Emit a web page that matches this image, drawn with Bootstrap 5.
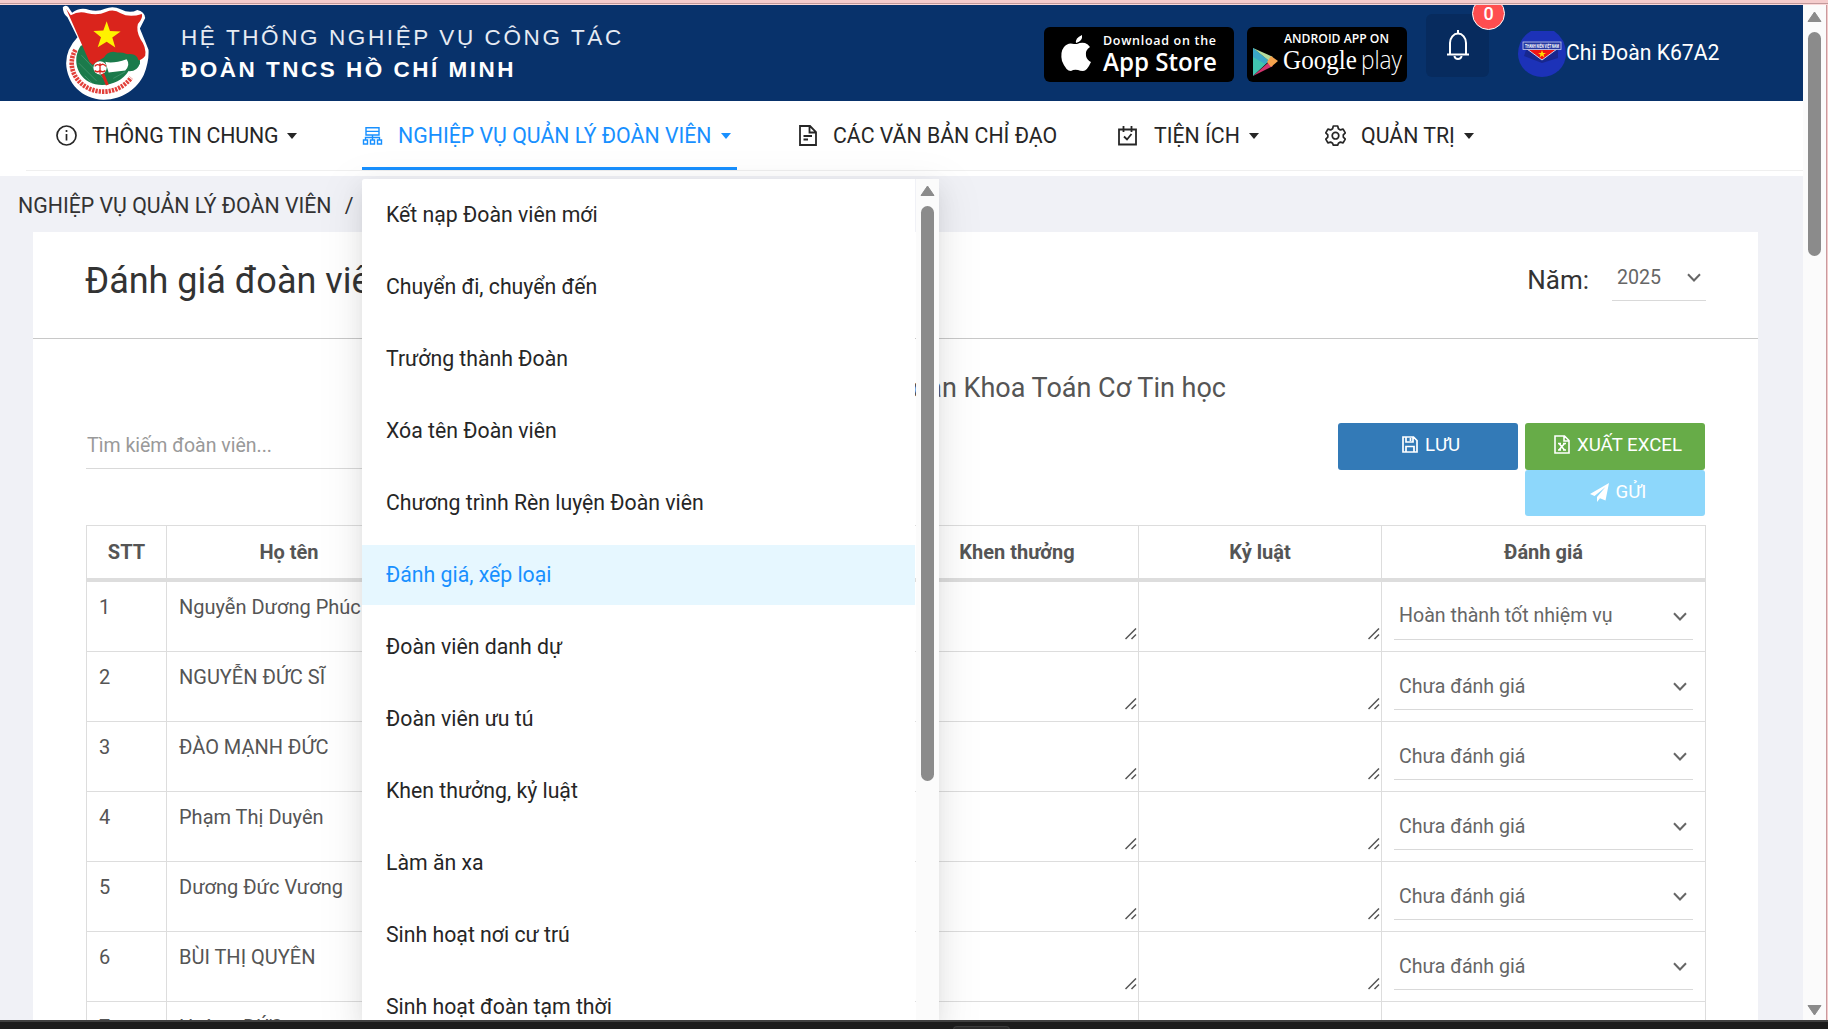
<!DOCTYPE html>
<html lang="vi">
<head>
<meta charset="utf-8">
<title>Đánh giá đoàn viên</title>
<link href="https://cdn.jsdelivr.net/npm/bootstrap@5.3.0/dist/css/bootstrap.min.css" rel="stylesheet">
<script src="https://cdn.jsdelivr.net/npm/bootstrap@5.3.0/dist/js/bootstrap.bundle.min.js"></script>
<style>
body{font-family:Roboto,"Open Sans",sans-serif;font-size:20px;line-height:1.4;color:#555;height:1029px;overflow:hidden;background:#f0f1f6}
svg{display:block;flex:none}
.edge-top{height:5px;background:#f4cccc;border-bottom:1px solid #fbd9d9;box-shadow:inset 0 -1px #c29a9c}
.screen{height:1015px}
.edge-right{width:2px;background:#f4cccc;border-left:1px solid #c99a9d}
.taskbar{height:9px;background:#1c1c1c;border-top:2px solid #404040}
.taskbar div{width:57px;height:4px;margin:4px 0 0 953px;background:#2b2b2b;border:1px solid #3c3c3c;border-radius:5px 5px 0 0}
.vscroll{background:#fbfbfb;flex:none}
.thumb{width:13px;border-radius:7px;background:#8b8b8b}
.brandbar{height:96px;background:#08326b;padding-left:62px}
.brand-text{font-family:"Liberation Sans",sans-serif;font-size:22.500px;line-height:32px;letter-spacing:2.600px;color:#e6ebf3;margin:17px 0 0 31px;white-space:nowrap;width:863px}
.brand-text b{letter-spacing:2.500px;color:#fff}
.store{height:55px;margin-top:22px;background:#000;border-radius:6px;color:#fff;position:relative}
.bell-box{width:63px;height:63px;background:#072b5e;border-radius:6px;margin:9px 0 0 19px;position:relative;padding:16px 0 0 20px}
.bell-count{position:absolute;left:46px;top:-17px;width:33px;height:33px;border-radius:50%;background:#ff4d4f;border:1px solid #fff;color:#fff;font-size:18px;font-weight:500;line-height:31px;text-align:center}
.user-name{color:#fff;font-size:21.2px;line-height:30px;margin:33px 0 0 0;white-space:nowrap}
.mainnav{height:75px;background:#fff;padding-left:26px}
.nav-line{height:70px;margin-top:0;border-bottom:1px solid #efefef;padding-left:30px;font-size:21.300px;color:#262626}
.nav-cell{height:70px;flex:none}
.nav-cell>div{height:69px;white-space:nowrap;display:inline-flex;align-items:center}
.nav-cell>div>svg{margin-right:15px}
.nav-cell>div.active{height:69px;border-bottom:3px solid #1890ff;color:#1890ff;padding-top:3px;width:375px}
.caret{border:5px solid transparent;border-top:6px solid;border-bottom:0;margin-left:9px;margin-top:0}
.crumbs{height:56px;padding:15px 0 0 18px;font-size:21.300px;line-height:30px;color:#333;white-space:nowrap}
.sheet{width:1725px;margin-left:33px;background:#fff;height:900px}
.sheet-head{height:107px;border-bottom:1px solid #c8c8c8;padding:0 52px 0 52px;color:#333}
.sheet-head h1{font-size:36px;line-height:48px;font-weight:400;margin:25px 0 0}
.year-label{font-size:26px;line-height:34px;margin:31px 23px 0 0}
.pick{border-bottom:1px solid #d9d9d9;color:#666;font-size:19.6px;display:flex;align-items:center;justify-content:space-between;padding:0 6px 0 5px}
.year-pick{width:94px;height:47px;margin-top:22px;padding:1px 5px 0 5px}
.unit-title{font-size:27px;line-height:36px;text-align:right;width:1145px;padding-top:31px;margin:0 0 17px;height:67px}
.find{width:330px;border:0;border-bottom:1px solid #d9d9d9;height:46px;padding:0 0 0 1px;font-size:19.5px;color:#999;line-height:45px}
.btn-tool{width:180px;height:47px;border-radius:3px;border:0;color:#fff;font-size:18.7px;line-height:42px;padding:0 0 4px 6px;display:flex;align-items:center;justify-content:center;gap:7px}
.btn-tool.send{background:#8dd7fb;height:46px;padding-bottom:2px}
.tools{height:102px}
.rating{width:1620px;margin-left:53px;table-layout:fixed;border-collapse:collapse}
.rating th,.rating td{border:1px solid #ddd;padding:0}
.rating th{height:54px;text-align:center;font-weight:700;border-bottom:4px solid #ddd;vertical-align:middle;font-size:20px}
.rating td{height:70px;vertical-align:top;padding:11px 12px 0;white-space:nowrap}
.rating tr.first-row td{height:72px}
.rating td.pad-pick{padding:12px 12px 0}
.rating td.pad-area{padding:46px 1px 0 0}
.rating td svg.grip{margin-left:auto}
.cell-pick{height:46px}
.menu-box{position:absolute;left:362px;top:174px;width:577px;height:841px;z-index:5;box-shadow:0 5px 9px -6px rgba(0,0,0,.12),0 9px 24px rgba(0,0,0,.08),0 13px 42px 12px rgba(0,0,0,.05);border-radius:3px 3px 0 0}
.menu-items{width:553px;background:#fff;padding-top:6px;margin-right:1px;color:#262626;font-size:21.25px;border-radius:3px 0 0 0}
.menu-items a{display:block;height:60px;line-height:60px;padding-left:24px;margin-bottom:12px;color:#262626;text-decoration:none}
.menu-items a:last-child{margin-bottom:0;height:43px}
.menu-items a.current{background:#e6f7ff;color:#1890ff}
</style>
</head>
<body>
<div class="edge-top"></div>
<div class="screen d-flex overflow-hidden">
  <div class="flex-grow-1 position-relative overflow-hidden">
    <header class="brandbar d-flex align-items-start">
      <svg width="88" height="95" viewBox="36 15 264 286">
        <path d="M38 22 Q44 14 54 20 L66 38 Q90 20 118 30 Q145 36 165 26 Q190 16 212 28 Q240 42 262 30 Q284 34 286 54 L270 86 Q284 120 296 150 Q298 185 282 225 C262 268 215 301 160 300 C95 298 50 250 48 190 Q48 148 82 112 L52 52 Q38 42 38 22Z" fill="#fff"/>
        <path d="M76 150 C52 190 68 238 108 262 C150 286 208 280 244 234" fill="none" stroke="#e2403a" stroke-width="14" stroke-dasharray="7 3"/>
        <path d="M92 138 C68 172 76 224 116 246 C156 268 214 252 236 214 Q262 216 270 190 Q274 164 240 160 L140 120Z" fill="#1b7a4b"/>
        <path d="M86 190 L140 244 M94 166 L160 236 M104 228 L126 250 M190 236 L226 216" stroke="#4f9d77" stroke-width="2"/>
        <path d="M48 26 L62 46 Q86 32 112 40 Q144 48 168 36 Q192 26 212 40 Q238 54 276 42 Q280 54 264 72 Q258 92 272 118 Q290 142 286 168 Q270 190 250 176 Q226 152 190 160 Q150 176 128 196 L118 186Z" fill="#da241c"/>
        <path d="M160 176 Q170 156 190 156 Q206 158 214 168 Q248 156 262 172 L270 192 Q256 216 226 214 L236 184Z" fill="#1b7a4b"/>
        <path d="M166 186 Q190 192 230 178 Q242 194 226 212 L176 218Z" fill="#fff"/>
        <circle cx="150" cy="204" r="20" fill="#fff"/><path d="M134 200 q8 -10 16 -2 q10 -10 18 2 M134 212 q8 8 16 0 q8 8 16 0 M150 190 V222" fill="none" stroke="#da241c" stroke-width="4"/>
        <path d="M158 222 L172 256" stroke="#da241c" stroke-width="9"/>
        <path d="M170 64 L180 93 L212 95 L187 113 L196 143 L170 126 L143 142 L153 112 L130 93 L160 92Z" fill="#fff200"/>
      </svg>
      <div class="brand-text">HỆ THỐNG NGHIỆP VỤ CÔNG TÁC<br><b>ĐOÀN TNCS HỒ CHÍ MINH</b></div>
      <svg class="store" width="190" height="55" viewBox="0 0 190 55">
        <path d="M38 8q1 6-6 8q-1-5 6-8M33 17q4-2 8-1q3 1 5 4q-5 3-4 9q1 4 5 6q-4 9-8 9q-3 0-5-1q-4-1-7 1q-5 0-9-10q-2-9 2-14q4-5 10-3Z" fill="#fff"/>
        <g fill="#fff" font-family="Open Sans, sans-serif"><text x="59" y="17.500" font-size="12.500" font-weight="600" textLength="113" lengthAdjust="spacing">Download on the</text><text x="59" y="43.500" font-size="26" font-weight="600" textLength="114" lengthAdjust="spacingAndGlyphs">App Store</text></g>
      </svg>
      <svg class="store" style="margin-left:13px" width="160" height="55" viewBox="0 0 160 55">
        <path d="M6 21V49L22 34Z" fill="#40c4b0"/><path d="M6 21L22 34L26 30Z" fill="#b5dc9c"/><path d="M6 21L6 30L18 37L22 34Z" fill="#3aa7c8"/><path d="M6 49L22 35L26 39Z" fill="#d2356e"/><path d="M24 29L31 34L24 40L20 35Z" fill="#f5a34e"/>
        <text x="37" y="15.500" fill="#fff" font-family="Open Sans, sans-serif" font-size="12" font-weight="600" textLength="105" lengthAdjust="spacingAndGlyphs">ANDROID APP ON</text>
        <text x="36" y="42" fill="#fff" font-family="Liberation Serif, serif" font-size="28" textLength="74" lengthAdjust="spacingAndGlyphs">Google</text>
        <text x="114" y="42" fill="#fff" font-family="Open Sans, sans-serif" font-weight="300" font-size="25" textLength="41" lengthAdjust="spacingAndGlyphs">play</text>
      </svg>
      <div class="bell-box">
        <svg width="24" height="30" viewBox="0 0 24 30" fill="none" stroke="#fff" stroke-width="2"><path d="M12 0V3M4 24V13a8 9.500 0 0 1 16 0V24M1 24.500H23M8.500 26a3.500 3 0 0 0 7 0"/></svg>
        <div class="bell-count">0</div>
      </div>
      <svg style="margin:26px 0 0 29px" width="48" height="46" viewBox="0 0 48 46"><path d="M13 0H36Q48 8 48 23A24 23 0 0 1 0 23Q0 8 13 0Z" fill="#1c32b8"/><path d="M8 19h32v8L24 32L6 25Z" fill="#17278f"/><path d="M9 18H39L24 29Z" fill="#f01515" stroke="#c9d2ee"/><path d="M24 19l1 3h3l-2.500 1.500l1 3l-2.500-2l-2.500 2l1-3L20 22h3Z" fill="#ffe000"/><rect x="5" y="11" width="38" height="7.500" fill="#26389f" stroke="#c5cdef" stroke-width=".8"/><text x="7" y="16.600" font-size="4.600" font-weight="700" fill="#fff" textLength="34" lengthAdjust="spacingAndGlyphs">THANH NIÊN VIỆT NAM</text></svg>
      <div class="user-name">Chi Đoàn K67A2</div>
    </header>
    <nav class="mainnav">
      <div class="nav-line d-flex">
        <div class="nav-cell" style="width:306px"><div><svg width="21" height="21" viewBox="0 0 21 21" fill="none" stroke="currentColor" stroke-width="1.700"><circle cx="10.500" cy="10.500" r="9.500"/><path d="M10.500 9V15.500M10.500 5V7"/></svg><span style="letter-spacing:-.15px">THÔNG TIN CHUNG</span><span class="caret"></span></div></div>
        <div class="nav-cell" style="width:435px"><div class="active"><svg width="21" height="18" viewBox="0 0 21 18" fill="none" stroke="currentColor" stroke-width="1.400"><path d="M4 .8H17V8H4ZM4 4.400H17M10.500 8V13M3.500 13V10.500H17.500V13M1.500 13H5.500V17H1.500ZM8.500 13H12.500V17H8.500ZM15.500 13H19.500V17H15.500Z"/></svg>NGHIỆP VỤ QUẢN LÝ ĐOÀN VIÊN<span class="caret"></span></div></div>
        <div class="nav-cell" style="width:320px"><div><svg style="margin-left:2px;margin-right:16px" width="18" height="21" viewBox="0 0 18 21" fill="none" stroke="currentColor" stroke-width="1.800"><path d="M1 1H11L17 7V20H1ZM10.500 1V7.500H17M4.500 11H13M4.500 14.500H9"/></svg>CÁC VĂN BẢN CHỈ ĐẠO</div></div>
        <div class="nav-cell" style="width:208px"><div><svg style="margin-right:17px;margin-left:1px" width="19" height="20" viewBox="0 0 19 20" fill="none" stroke="currentColor" stroke-width="1.800"><path d="M1 3.500H18V18.500H1ZM5.500 0V6M13.500 0V6M6 10.500L9 13.500L13.500 8"/></svg>TIỆN ÍCH<span class="caret"></span></div></div>
        <div class="nav-cell"><div><svg width="21" height="21" viewBox="0 0 21 21" fill="none" stroke="currentColor" stroke-width="1.700" stroke-linejoin="round"><path d="M8.300 1h4.400l.7 2.700l2 1.200l2.700-.8l2.200 3.800l-2 2v2.200l2 2l-2.200 3.800l-2.700-.8l-2 1.200l-.7 1.900H8.300l-.7-1.900l-2-1.200l-2.700.8L.8 14.100l2-2V9.900l-2-2L2.900 4.100l2.700.8l2-1.200Z"/><circle cx="10.500" cy="10.700" r="3.300"/></svg>QUẢN TRỊ<span class="caret"></span></div></div>
      </div>
    </nav>
    <div class="crumbs">NGHIỆP VỤ QUẢN LÝ ĐOÀN VIÊN <span class="ms-2">/</span></div>
    <main class="sheet">
      <div class="sheet-head d-flex align-items-start">
        <h1>Đánh giá đoàn viên</h1>
        <div class="year-label ms-auto">Năm:</div>
        <div class="pick year-pick">2025<svg width="14" height="9" viewBox="0 0 14 9" fill="none" stroke="#666" stroke-width="2"><path d="M1 1.200L7 7.500L13 1.200"/></svg></div>
      </div>
      <div class="unit-title ms-5 ps-1">Chi Đoàn K67A2 - Đoàn Khoa Toán Cơ Tin học</div>
      <div class="tools d-flex justify-content-between" style="padding:0 53px 0 53px">
        <div class="find">Tìm kiếm đoàn viên...</div>
        <div class="d-flex align-items-start" style="gap:7px">
          <button class="btn-tool" style="background:#337ab7"><svg width="16" height="17" viewBox="0 0 16 17" fill="none" stroke="#fff" stroke-width="1.700"><path d="M1 1H11.500L15 4.500V16H1ZM4 1V6H11V1M4 16V10.500H12V16"/><path d="M8.500 2v3"/></svg>LƯU</button>
          <div>
            <button class="btn-tool" style="background:#67ac48"><svg width="16" height="19" viewBox="0 0 16 19" fill="none" stroke="#fff" stroke-width="1.600"><path d="M1 1H10.500L15 5.500V18H1ZM10 1V6H15M5 8.500L10.500 15M10.500 8.500L5 15M4 8.500H7M9 8.500h3M4 15h3M9 15h3"/></svg>XUẤT EXCEL</button>
            <button class="btn-tool send"><svg width="19" height="19" viewBox="0 0 19 19" fill="#fff"><path d="M19 0L0 11L4.500 13L15.500 4L7 14V19L10 15.300L15.500 17.500Z"/></svg>GỬI</button>
          </div>
        </div>
      </div>
      <table class="rating">
        <colgroup><col style="width:80px"><col style="width:245px"><col style="width:242px"><col style="width:242px"><col style="width:243px"><col style="width:243px"><col></colgroup>
        <thead><tr><th>STT</th><th>Họ tên</th><th>Ngày sinh</th><th>Chức vụ</th><th>Khen thưởng</th><th>Kỷ luật</th><th>Đánh giá</th></tr></thead>
        <tbody id="rows"></tbody>
      </table>
    </main>
    <div class="menu-box d-flex">
      <div class="menu-items">
        <a>Kết nạp Đoàn viên mới</a><a>Chuyển đi, chuyển đến</a><a>Trưởng thành Đoàn</a><a>Xóa tên Đoàn viên</a><a>Chương trình Rèn luyện Đoàn viên</a><a class="current">Đánh giá, xếp loại</a><a>Đoàn viên danh dự</a><a>Đoàn viên ưu tú</a><a>Khen thưởng, kỷ luật</a><a>Làm ăn xa</a><a>Sinh hoạt nơi cư trú</a><a>Sinh hoạt đoàn tạm thời</a>
      </div>
      <div class="vscroll flex-grow-1 ps-1">
        <svg class="mb-2" style="margin:6px 0 0 0" width="15" height="12" viewBox="0 0 15 12"><path d="M7.500 1L14 10.500H1Z" fill="#8b8b8b" stroke="#8b8b8b" stroke-linejoin="round"/></svg>
        <div class="thumb" style="height:575px;margin:9px 0 0 1px"></div>
      </div>
    </div>
  </div>
  <div class="vscroll d-flex flex-column align-items-center" style="width:23px">
    <svg style="margin:6px 0 9px" width="15" height="12" viewBox="0 0 15 12"><path d="M7.500 1L14 10.500H1Z" fill="#8b8b8b" stroke="#8b8b8b" stroke-linejoin="round"/></svg>
    <div class="thumb" style="height:224px"></div>
    <svg class="mt-auto" style="margin-bottom:4px" width="15" height="12" viewBox="0 0 15 12"><path d="M7.500 11L14 1.500H1Z" fill="#8b8b8b" stroke="#8b8b8b" stroke-linejoin="round"/></svg>
  </div>
  <div class="edge-right"></div>
</div>
<div class="taskbar"><div></div></div>
<script>
const people=["Nguyễn Dương Phúc","NGUYỄN ĐỨC SĨ","ĐÀO MẠNH ĐỨC","Phạm Thị Duyên","Dương Đức Vương","BÙI THỊ QUYÊN","Hoàng ĐỨC"];
const grip='<svg class="grip" width="12" height="12" viewBox="0 0 12 12" stroke="#555" stroke-width="1.5"><path d="M.5 11L11 .5M6.500 11L11 6.500"/></svg>';
document.getElementById('rows').innerHTML=people.map((name,i)=>`<tr class="${i?'':'first-row'}"><td>${i+1}</td><td>${name}</td><td></td><td></td><td class="pad-area">${grip}</td><td class="pad-area">${grip}</td><td class="pad-pick"><div class="pick cell-pick">${i?'Chưa đánh giá':'Hoàn thành tốt nhiệm vụ'}<svg width="14" height="9" viewBox="0 0 14 9" fill="none" stroke="#666" stroke-width="2"><path d="M1 1.200L7 7.500L13 1.200"/></svg></div></td></tr>`).join('');
</script>
</body>
</html>
